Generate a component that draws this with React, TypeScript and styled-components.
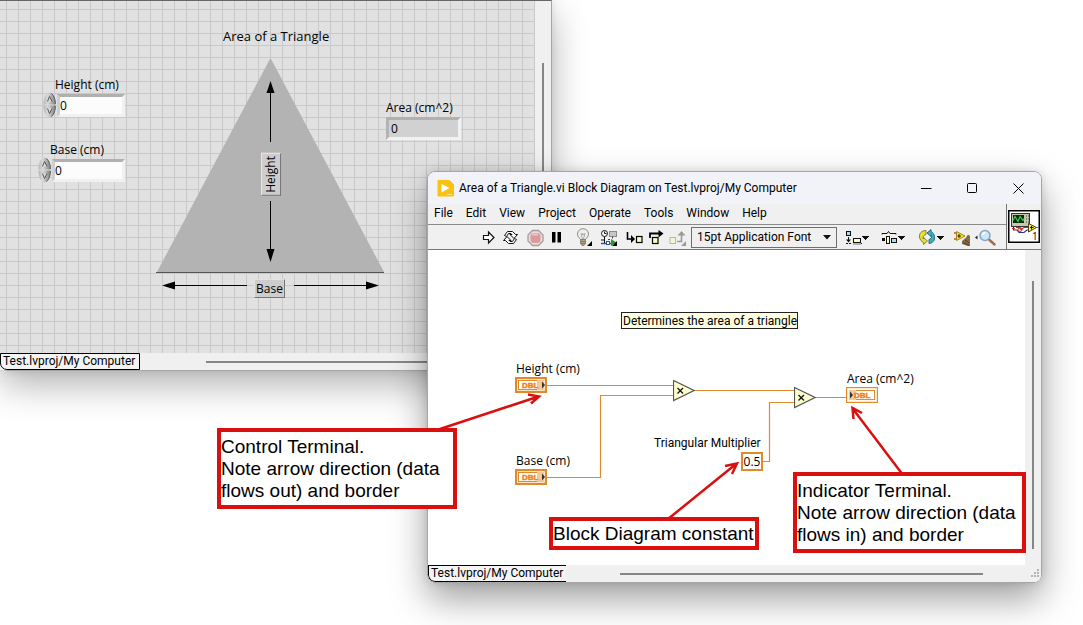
import React from "react";
import styled, { createGlobalStyle } from "styled-components";

const GlobalStyle = createGlobalStyle`
  *, *::before, *::after { box-sizing: border-box; }
  html, body { margin: 0; padding: 0; background: #fff; }
  body, button, input, select {
    font-family: "Open Sans", "Noto Sans", sans-serif;
    font-size: 12px;
    line-height: 16px;
    color: #000;
  }
  button { padding: 0; border: 0; background: none; }
  svg { display: block; }
`;

const ORANGE = "#e08a2c";
const RED = "#d9100f";
const NARROW = `Roboto, "Open Sans", sans-serif`;

/* ---------- windows ---------- */

const Desktop = styled.main`
  position: relative;
  min-height: 100vh;
  overflow: hidden;
`;

const PanelWindow = styled.section`
  position: absolute;
  top: 0;
  left: 0;
  width: 552px;
  height: 371px;
  display: flex;
  flex-direction: column;
  border: 1px solid #a6a6a6;
  border-left: 0;
  border-top-color: #666;
  border-bottom-left-radius: 8px;
  background: #f0f0f0;
  box-shadow: 0 14px 36px rgba(0, 0, 0, 0.3), 0 0 8px rgba(0, 0, 0, 0.1);
`;

const DiagramWindow = styled.section`
  position: absolute;
  top: 171px;
  left: 427px;
  right: 41px;
  height: 412px;
  display: flex;
  flex-direction: column;
  border: 1px solid #a6a6a6;
  border-radius: 8px;
  overflow: hidden;
  background: #f0f0f0;
`;

const DiagramShadow = styled.div`
  position: absolute;
  top: 171px;
  left: 427px;
  right: 41px;
  height: 412px;
  border-radius: 8px;
  box-shadow: 0 16px 36px rgba(0, 0, 0, 0.38), 0 0 8px rgba(0, 0, 0, 0.12);
`;

const Workspace = styled.div`
  display: flex;
  flex: 1;
  min-height: 0;
`;

const PanelCanvas = styled.div`
  position: relative;
  flex: 1;
  overflow: hidden;
  background-color: #e1e1e1;
  background-image: linear-gradient(to right, #c9c9c9 1px, transparent 1px),
    linear-gradient(to bottom, #c9c9c9 1px, transparent 1px);
  background-size: 12px 12px;
  background-position: 6px 8px;
`;

const DiagramCanvas = styled.div`
  position: relative;
  flex: 1;
  overflow: hidden;
  background: #fff;
`;

const VerticalScroll = styled.div<{ $top: number; $bottom: number }>`
  display: flex;
  justify-content: center;
  width: 16px;
  padding: ${(p) => p.$top}px 0 ${(p) => p.$bottom}px;
  background: #f0f0f0;
`;

const VerticalThumb = styled.div`
  width: 2px;
  background: #868686;
`;

const StatusBar = styled.footer`
  display: flex;
  align-items: center;
  height: 17px;
  background: #f0f0f0;
`;

const ProjectButton = styled.button<{ $open?: boolean }>`
  width: ${(p) => (p.$open ? 138 : 140)}px;
  height: 17px;
  padding: 0 2px;
  border: 1px solid #000;
  border-bottom-left-radius: 7px;
  ${(p) => p.$open && "border-right: 0;"}
  font-family: ${NARROW};
  line-height: 15px;
  text-align: left;
  white-space: nowrap;
  background: #f4f4f4;
`;

const HorizontalThumb = styled.div<{ $left: number; $right: number }>`
  flex: 1;
  height: 2px;
  margin: 0 ${(p) => p.$right}px 0 ${(p) => p.$left}px;
  background: #868686;
`;

/* ---------- free items on a canvas ---------- */

const Item = styled.div<{ $x: number; $y: number }>`
  position: absolute;
  left: ${(p) => p.$x}px;
  top: ${(p) => p.$y}px;
  white-space: nowrap;
`;

const Layer = styled.svg`
  position: absolute;
  inset: 0;
  width: 100%;
  height: 100%;
  pointer-events: none;
`;

const Heading = styled.h2`
  margin: 0;
  font-size: 13px;
  font-weight: 400;
  line-height: 16px;
`;

const NarrowText = styled.div`
  font-family: ${NARROW};
`;

const FieldLabel = styled.label<{ $indent: number }>`
  display: block;
  margin-left: ${(p) => p.$indent}px;
  line-height: 14px;
`;

const FieldRow = styled.div`
  display: flex;
  align-items: center;
`;

const Spinner = styled.div`
  display: flex;
  flex-direction: column;
`;

const Field = styled.input<{ $width: number; $readOnly?: boolean }>`
  width: ${(p) => p.$width}px;
  height: 23px;
  margin-top: ${(p) => (p.$readOnly ? 2 : 0)}px;
  padding: 0 ${(p) => (p.$readOnly ? 2 : 0)}px;
  border: 3px solid;
  border-color: #b0b0b0 #f1f1f1 #f1f1f1 ${(p) => (p.$readOnly ? "#b4b4b4" : "#cfcfcf")};
  border-radius: 0;
  outline: 0;
  background: ${(p) => (p.$readOnly ? "#d1d1d1" : "#fcfcfc")};
`;

const Tag = styled.div<{ $vertical?: boolean }>`
  padding: 1px 1px 0;
  border: 1px solid;
  border-color: #e2e2e2 #777 #777 #e2e2e2;
  background: #cdcdcd;
  ${(p) => p.$vertical && "padding: 2px 1px; writing-mode: vertical-rl; transform: rotate(180deg); border-color: #777 #e8e8e8 #e8e8e8 #777;"}
`;

const Note = styled.div`
  padding: 1px 0 0 1px;
  border: 1px solid #222;
  font-family: ${NARROW};
  line-height: 14px;
  background: #ffffe1;
`;

const Constant = styled.div`
  width: 22px;
  height: 19px;
  border: 2px solid ${ORANGE};
  line-height: 15px;
  text-align: center;
  background: #fff;
`;

/* ---------- title, menu, toolbar ---------- */

const TitleBar = styled.header`
  display: flex;
  align-items: center;
  gap: 5px;
  height: 32px;
  padding-left: 9px;
  background: #f1f3f9;
`;

const Title = styled.h1`
  flex: 1;
  margin: 0;
  font-family: ${NARROW};
  font-size: 12px;
  font-weight: 400;
  line-height: 16px;
  white-space: nowrap;
`;

const CaptionButton = styled.button`
  display: flex;
  align-items: center;
  justify-content: center;
  width: 46px;
  height: 32px;
`;

const CommandArea = styled.div`
  display: flex;
  height: 46px;
  border-bottom: 1px solid #777;
`;

const Commands = styled.div`
  display: flex;
  flex: 1;
  flex-direction: column;
  border-right: 1px solid #777;
`;

const MenuBar = styled.nav`
  display: flex;
  align-items: flex-start;
  height: 21px;
  border-bottom: 1px solid #8a8a8a;
`;

const MenuButton = styled.button`
  height: 18px;
  padding: 0 7px 0 6px;
  font-family: ${NARROW};
  line-height: 18px;
`;

const Toolbar = styled.div`
  display: flex;
  align-items: center;
  flex: 1;
  padding-left: 49px;
`;

const ToolGroup = styled.div<{ $gap?: number }>`
  display: flex;
  margin-right: ${(p) => p.$gap ?? 0}px;
`;

const ToolButton = styled.button`
  display: block;
  height: 20px;
`;

const FontPicker = styled.div`
  position: relative;
  width: 146px;
  margin-right: 3px;
`;

const FontSelect = styled.select`
  appearance: none;
  width: 100%;
  height: 21px;
  padding: 0 20px 0 5px;
  border: 1px solid #6f6f6f;
  border-radius: 0;
  font-family: ${NARROW};
  background: #f0f0f0;
`;

const PickerArrow = styled.svg`
  position: absolute;
  right: 6px;
  top: 8px;
  pointer-events: none;
`;

const ConnectorPane = styled.div`
  display: flex;
  justify-content: center;
  width: 34px;
  padding-top: 6px;
`;

/* ---------- annotations ---------- */

const Callout = styled.p<{ $x: number; $y: number; $width: number }>`
  position: absolute;
  left: ${(p) => p.$x}px;
  top: ${(p) => p.$y}px;
  width: ${(p) => p.$width}px;
  margin: 0;
  padding: 4px 0 3px;
  border: 4px solid ${RED};
  font-family: "Liberation Sans", Arial, sans-serif;
  font-size: 19px;
  line-height: 22px;
  white-space: nowrap;
  background: #fff;
`;

const CalloutBar = styled(Callout)`
  padding: 2px 0 1px;
`;

/* ---------- drawings ---------- */

const Caret = ({ x }: { x: number }) => <path d={`M${x} 9h7v1h-1v1h-1v1h-1v1h-1v-1h-1v-1h-1v-1h-1z`} fill="#111" />;

const SpinArrow = ({ down }: { down?: boolean }) => (
  <svg width="14" height="13" viewBox="0 0 14 13">
    <defs>
      <linearGradient id={down ? "spinDown" : "spinUp"} x1="0" x2="1">
        <stop offset="0" stopColor="#b4b4b4" />
        <stop offset=".35" stopColor="#dadada" />
        <stop offset="1" stopColor="#808080" />
      </linearGradient>
    </defs>
    <g transform={down ? "matrix(1 0 0 -1 0 13)" : undefined}>
      <path d="M.5 12.500C.5 6 2.500 1 6.500 0.500C10.500 1 12.500 6 12.500 12.500Z" fill={`url(#${down ? "spinDown" : "spinUp"})`} />
      <path d="M8.500 1.500C11 3.500 12.500 8 12.500 12" fill="none" stroke="#666" />
      <path d="M4.500 9.500L6.500 4.500L9 9.500" fill="#ddd" stroke="#555" />
    </g>
  </svg>
);

const RunIcon = () => (
  <svg width="22" height="20">
    <path d="M6.500 8.500H11.500V5L17 10.500L11.500 16V12.500H6.500Z" fill="#fff" stroke="#111" strokeWidth="1.200" />
  </svg>
);

const RunLoopIcon = () => (
  <svg width="22" height="20">
    <path d="M5.500 8.500L8.500 4.500H13.500L16.500 7.500H18.500L15 11.500L11 7.500H13L12 6.500H9.500L7.500 9.500Z" fill="#fff" stroke="#111" />
    <path d="M17.500 12.500L14.500 16.500H9.500L6.500 13.500H4.500L8 9.500L12 13.500H10L11 14.500H13.500L15.500 11.500Z" fill="#fff" stroke="#111" />
  </svg>
);

const AbortIcon = () => (
  <svg width="22" height="20">
    <path d="M7.500 3.500h6l4.500 4.500v6l-4.500 4.500h-6L3 14V8z" fill="#eadcdc" stroke="#a79b9b" strokeWidth="1.300" />
    <rect x="5.500" y="6" width="10" height="10" rx="3.500" fill="#d99a9a" />
    <path d="M7 7.500h6" stroke="#edc4c4" strokeWidth="2" />
  </svg>
);

const PauseIcon = () => (
  <svg width="22" height="20">
    <path d="M5 5h3.500v10.500H5zM10.500 5H14v10.500h-3.500z" fill="#000" />
  </svg>
);

const BulbIcon = () => (
  <svg width="24" height="20">
    <path d="M7.500 12.500C6 10.500 4.500 9.500 4.500 7A5.500 5.300 0 0 1 15.500 7C15.500 9.500 14 10.500 12.500 12.500Z" fill="#eeeeea" stroke="#8d8d8d" />
    <path d="M8 6.500L9.500 12M12 6.500L10.500 12M8 6.500l1.300 1.500L10 6.500l.8 1.500L12 6.500" fill="none" stroke="#999" strokeWidth=".8" />
    <path d="M7.500 12.500h5v4l-1.500 2h-2l-1.500-2z" fill="#b3a57a" stroke="#777" strokeWidth=".8" />
    <path d="M7.500 14.500h5M7.500 16.500h5" stroke="#77704f" strokeWidth=".8" />
    <path d="M19 14v5h-5z" fill="#000" />
  </svg>
);

const RetainIcon = () => (
  <svg width="24" height="20">
    <circle cx="7.500" cy="6.500" r="3" fill="#fff" stroke="#111" />
    <path d="M7.500 4.500v2h2M7.500 9.500v7M4 13h3" fill="none" stroke="#111" />
    <rect x="12.500" y="4.500" width="7" height="5" fill="#c6c6c6" stroke="#8a8a8a" />
    <path d="M4 16.500h12" stroke="#2857a0" strokeWidth="1.400" />
    <rect x="9.500" y="14.500" width="3" height="3" fill="#fff" stroke="#2857a0" />
    <path d="M11 12.500h2M15.500 9.500v2" stroke="#444" />
    <path d="M14 12l5.500 3.500L14 19z" fill="#249b2c" />
    <path d="M20 14v5h-5z" fill="#000" />
  </svg>
);

const StepIntoIcon = () => (
  <svg width="24" height="20">
    <path d="M6.500 5v7H11" fill="none" stroke="#000" strokeWidth="1.600" />
    <path d="M10 8l4 4-4 4z" fill="#000" />
    <rect x="15.500" y="9.500" width="5.500" height="6" fill="#fffbc4" stroke="#000" strokeWidth="1.200" />
  </svg>
);

const StepOverIcon = () => (
  <svg width="24" height="20">
    <path d="M5 11V6.500h10" fill="none" stroke="#000" strokeWidth="1.800" />
    <path d="M13.500 3l5 3.500-5 4z" fill="#000" />
    <rect x="7.500" y="10.500" width="5.500" height="6" fill="#fffbc4" stroke="#000" strokeWidth="1.200" />
  </svg>
);

const StepOutIcon = () => (
  <svg width="22" height="20">
    <rect x="1" y="10.500" width="5.500" height="6" fill="#f7f4d6" stroke="#b9b7a2" />
    <path d="M8 14.500h4.500V8" fill="none" stroke="#9a9a9a" strokeWidth="1.600" />
    <path d="M8.500 8.500l4-4.500 4 4.500z" fill="#9a9a9a" />
    <path d="M17 14v5h-5z" fill="#999" />
  </svg>
);

const AlignIcon = () => (
  <svg width="36" height="20">
    <rect x="6.500" y="4.500" width="4" height="4" fill="#9de1ee" stroke="#111" />
    <path d="M8.500 10v3" stroke="#111" />
    <path d="M6 12.500h5L8.500 15.500z" fill="#111" />
    <path d="M6 16.500h6M21 16.500h1" stroke="#111" strokeDasharray="2 1" />
    <rect x="13.500" y="11.500" width="7" height="4" fill="#fffbc4" stroke="#111" />
    <path d="M13 17h8" stroke="#777" />
    <Caret x={22} />
  </svg>
);

const DistributeIcon = () => (
  <svg width="36" height="20">
    <path d="M6 7.500V6.500H11L12.500 4.500L14 6.500H20V7.500" fill="none" stroke="#111" />
    <rect x="6" y="11" width="3" height="3" fill="#111" />
    <rect x="10.500" y="9.500" width="3" height="7" fill="#fffbc4" stroke="#111" />
    <rect x="15.500" y="11.500" width="5" height="4" fill="#9de1ee" stroke="#111" />
    <Caret x={22} />
  </svg>
);

const ReorderIcon = () => (
  <svg width="36" height="20">
    <path d="M14 3.500C9.500 3.500 7 6.500 7.500 10C8 13 9.500 14.500 11.500 15.500V17.500L15.500 14L11.500 10.500V12C10.500 11 11 8.500 14 7.500Z" fill="#e7df39" stroke="#77742c" strokeWidth=".9" />
    <path d="M17 16.500C21 16 23 13.500 22.500 9.500C22 7 21 5.500 19 4.500V2.500L15 6L19 9.500V8C20 9.500 20 11.500 17 12.500Z" fill="#42aec2" stroke="#255f6b" strokeWidth=".9" />
    <Caret x={25} />
  </svg>
);

const CleanupIcon = () => (
  <svg width="25" height="20">
    <path d="M8.500 4.500L17 9L8.500 13.500z" fill="#f6e431" stroke="#a78a13" />
    <path d="M11 7v4M9.500 9h3.500" stroke="#222" />
    <path d="M6 6h2M6 12h2" stroke="#d5481e" strokeWidth="1.500" />
    <path d="M14 14l4-3.500 2-3 2 1.500v10h-2l-6-2z" fill="#8a6a48" />
    <path d="M15 15.500l6 3M17 13l4 3" stroke="#4c3522" />
  </svg>
);

const SearchIcon = () => (
  <svg width="26" height="20">
    <path d="M4.500 8.500v4L2 10.500z" fill="#222" />
    <circle cx="12" cy="8.500" r="5" fill="#c9e8fb" stroke="#8aa5c4" strokeWidth="1.500" />
    <path d="M9.500 8a3 3 0 0 1 3-2.500" fill="none" stroke="#fff" strokeWidth="1.500" />
    <path d="M16.500 13l5 4.500" stroke="#a66d4b" strokeWidth="2.500" strokeLinecap="round" />
  </svg>
);

const AppIcon = () => (
  <svg width="17" height="17">
    <path d="M1 .5h11.500l4 4v11.500h-15.500z" fill="#fbc112" stroke="#fbc112" strokeLinejoin="round" />
    <path d="M4.500 4l8 4-8 4.500z" fill="#fff" />
    <path d="M10.500 14.500h2M13.500 14.500h1.500" stroke="#fff3bd" />
  </svg>
);

const ViIcon = () => (
  <svg width="32" height="33" viewBox="0 0 32 33">
    <rect x=".75" y=".75" width="30.500" height="31.500" fill="#fff" stroke="#000" strokeWidth="1.500" />
    <rect x="3.500" y="3.500" width="18" height="13" fill="#c8c6ae" stroke="#333" />
    <rect x="5" y="5" width="11" height="8" fill="#062b0c" />
    <path d="M5 10.500l2-4 3 5 2-5 3 4 1-2" fill="none" stroke="#35d04a" strokeWidth="1.200" />
    <path d="M18 6h1M20 6h1M18 9h1M20 9h1M18 12h1M20 12h1" stroke="#444" />
    <path d="M5.500 17v3h3.500l2 2.500h5l3-2.500h2" fill="none" stroke="#28358f" strokeWidth="1.200" />
    <path d="M4 18.500h3M8 17.500h3l2 2 3-2h4" fill="none" stroke="#cf2424" strokeWidth="1.200" />
    <circle cx="12" cy="19.500" r="2" fill="none" stroke="#cf2424" />
    <path d="M20.500 13.500l8 4-8 4.500z" fill="#ffee35" stroke="#4b4310" />
    <path d="M23.500 16v3.500M22 17.500h3.500" stroke="#111" />
    <path d="M28.500 17.500h2" stroke="#d33" />
    <text x="24" y="30" fontSize="10" fontFamily="Open Sans, sans-serif">1</text>
  </svg>
);

const Terminal = ({ indicator }: { indicator?: boolean }) => (
  <svg width="32" height="16" role="img" aria-label="DBL terminal">
    <rect
      x={indicator ? 0.5 : 1}
      y={indicator ? 0.5 : 1}
      width={indicator ? 31 : 30}
      height={indicator ? 15 : 14}
      fill="#fffaf0"
      stroke={ORANGE}
      strokeWidth={indicator ? 1.3 : 2.4}
    />
    <rect x="3.500" y="3.500" width="25" height="9" fill="#fff" stroke={ORANGE} />
    <rect x={indicator ? 3 : 22} y="3" width="7" height="10" fill="#f8c795" />
    <text
      x={indicator ? 8 : 7}
      y="11"
      fontSize="8"
      fontWeight="700"
      fontFamily="Liberation Sans, sans-serif"
      fill="#ee8417"
      stroke="#ee8417"
      strokeWidth=".5"
    >
      DBL
    </text>
    <path d={indicator ? "M4 4.500v7l3-3.500z" : "M27 4.500v7l3-3.500z"} fill="#333" />
  </svg>
);

const Multiply = () => (
  <svg width="22" height="22" role="img" aria-label="Multiply">
    <path d="M.5 .5L21 10.500L.5 20.500Z" fill="#ffffcf" stroke="#555" strokeWidth="1.200" />
    <path d="M4.500 8l5.500 5.500M10 8l-5.500 5.500" stroke="#111" strokeWidth="1.300" />
  </svg>
);

const PanelArt = () => (
  <Layer aria-hidden="true">
    <path d="M270.500 57L384 271H157Z" fill="#b3b3b3" />
    <path d="M156 271.500H384" stroke="#555" />
    <path d="M270.500 90V141M270.500 200V250M172 284.500H247M294 284.500H369" stroke="#000" strokeWidth="1" />
    <path d="M270.500 80l4 12h-8zM270.500 261l4-13h-8zM162 284.500l13-4v8zM379 284.500l-13-4v8z" fill="#000" />
  </Layer>
);

const Wires = () => (
  <Layer aria-hidden="true">
    <path
      d="M119 135.500H246M119 227.500H172.500V145.500H246M266 140.500H367M334 211.500H341.500V152.500H367M387 147.500H419"
      fill="none"
      stroke={ORANGE}
      strokeWidth="1.200"
    />
  </Layer>
);

const NumericControl = ({ id, label, indent, width }: { id: string; label: string; indent: number; width: number }) => (
  <>
    <FieldLabel htmlFor={id} $indent={indent}>{label}</FieldLabel>
    <FieldRow>
      <Spinner>
        <button aria-label={`Increase ${label}`}><SpinArrow /></button>
        <button aria-label={`Decrease ${label}`}><SpinArrow down /></button>
      </Spinner>
      <Field id={id} $width={width} defaultValue="0" />
    </FieldRow>
  </>
);

const MENUS = ["File", "Edit", "View", "Project", "Operate", "Tools", "Window", "Help"];

export default function App() {
  return (
    <>
      <GlobalStyle />
      <Desktop>
        <PanelWindow aria-label="Front panel">
          <Workspace>
            <PanelCanvas>
              <PanelArt />
              <Item $x={223} $y={27}><Heading>Area of a Triangle</Heading></Item>
              <Item $x={43} $y={77}>
                <NumericControl id="height" label="Height (cm)" indent={12} width={68} />
              </Item>
              <Item $x={38} $y={142}>
                <NumericControl id="base" label="Base (cm)" indent={12} width={73} />
              </Item>
              <Item $x={386} $y={100}>
                <FieldLabel htmlFor="area" $indent={0}>Area (cm^2)</FieldLabel>
                <Field id="area" $width={75} $readOnly readOnly value="0" />
              </Item>
              <Item $x={261} $y={152}><Tag $vertical>Height</Tag></Item>
              <Item $x={254} $y={278}><Tag>Base</Tag></Item>
            </PanelCanvas>
            <VerticalScroll $top={62} $bottom={20}><VerticalThumb /></VerticalScroll>
          </Workspace>
          <StatusBar>
            <ProjectButton>Test.lvproj/My Computer</ProjectButton>
            <HorizontalThumb $left={66} $right={60} />
          </StatusBar>
        </PanelWindow>

        <DiagramShadow />
        <DiagramWindow aria-label="Block diagram">
          <TitleBar>
            <AppIcon />
            <Title>Area of a Triangle.vi Block Diagram on Test.lvproj/My Computer</Title>
            <ToolGroup>
              <CaptionButton aria-label="Minimize">
                <svg width="11" height="11"><path d="M0 5.500h10.500" stroke="#000" /></svg>
              </CaptionButton>
              <CaptionButton aria-label="Maximize">
                <svg width="11" height="11"><rect x=".5" y=".5" width="9" height="9" rx="1" fill="none" stroke="#000" /></svg>
              </CaptionButton>
              <CaptionButton aria-label="Close">
                <svg width="11" height="11"><path d="M.5 .5l10 10M10.500 .5l-10 10" stroke="#000" /></svg>
              </CaptionButton>
            </ToolGroup>
          </TitleBar>
          <CommandArea>
            <Commands>
              <MenuBar>
                {MENUS.map((name) => <MenuButton key={name}>{name}</MenuButton>)}
              </MenuBar>
              <Toolbar role="toolbar">
                <ToolGroup $gap={4}>
                  <ToolButton aria-label="Run"><RunIcon /></ToolButton>
                  <ToolButton aria-label="Run continuously"><RunLoopIcon /></ToolButton>
                </ToolGroup>
                <ToolGroup $gap={4}>
                  <ToolButton aria-label="Abort"><AbortIcon /></ToolButton>
                  <ToolButton aria-label="Pause"><PauseIcon /></ToolButton>
                </ToolGroup>
                <ToolGroup>
                  <ToolButton aria-label="Highlight execution"><BulbIcon /></ToolButton>
                  <ToolButton aria-label="Retain wire values"><RetainIcon /></ToolButton>
                  <ToolButton aria-label="Step into"><StepIntoIcon /></ToolButton>
                  <ToolButton aria-label="Step over"><StepOverIcon /></ToolButton>
                  <ToolButton aria-label="Step out"><StepOutIcon /></ToolButton>
                </ToolGroup>
                <FontPicker>
                  <FontSelect aria-label="Font">
                    <option>15pt Application Font</option>
                  </FontSelect>
                  <PickerArrow width="8" height="5"><path d="M0 0h8L4 4.500z" fill="#111" /></PickerArrow>
                </FontPicker>
                <ToolGroup>
                  <ToolButton aria-label="Align objects"><AlignIcon /></ToolButton>
                  <ToolButton aria-label="Distribute objects"><DistributeIcon /></ToolButton>
                  <ToolButton aria-label="Reorder"><ReorderIcon /></ToolButton>
                  <ToolButton aria-label="Clean up diagram"><CleanupIcon /></ToolButton>
                  <ToolButton aria-label="Search"><SearchIcon /></ToolButton>
                </ToolGroup>
              </Toolbar>
            </Commands>
            <ConnectorPane><ViIcon /></ConnectorPane>
          </CommandArea>
          <Workspace>
            <DiagramCanvas>
              <Wires />
              <Item $x={193} $y={62}><Note>Determines the area of a triangle</Note></Item>
              <Item $x={88} $y={111}>Height (cm)</Item>
              <Item $x={87} $y={127}><Terminal /></Item>
              <Item $x={88} $y={203}>Base (cm)</Item>
              <Item $x={87} $y={219}><Terminal /></Item>
              <Item $x={245} $y={130}><Multiply /></Item>
              <Item $x={366} $y={137}><Multiply /></Item>
              <Item $x={226} $y={185}><NarrowText>Triangular Multiplier</NarrowText></Item>
              <Item $x={313} $y={202}><Constant>0.5</Constant></Item>
              <Item $x={419} $y={121}>Area (cm^2)</Item>
              <Item $x={418} $y={137}><Terminal indicator /></Item>
            </DiagramCanvas>
            <VerticalScroll $top={31} $bottom={16}><VerticalThumb /></VerticalScroll>
          </Workspace>
          <StatusBar>
            <ProjectButton $open>Test.lvproj/My Computer</ProjectButton>
            <HorizontalThumb $left={54} $right={48} />
            <svg width="10" height="10" aria-hidden="true">
              <path d="M6 0h2v2h-2zM3 3h2v2h-2zM6 3h2v2h-2zM0 6h2v2h-2zM3 6h2v2h-2zM6 6h2v2h-2z" fill="#b4b4b4" />
            </svg>
          </StatusBar>
        </DiagramWindow>

        <Layer aria-hidden="true">
          <g fill="none" stroke={RED} strokeWidth="2.500">
            <path d="M437 430L537 397M528 394.500L539 396.500L531 403.500" />
            <path d="M668 519L736 464M725 466L737 463.500L732 474" />
            <path d="M903 475L853 409M853.500 419L852.500 408L862 413" />
          </g>
        </Layer>
        <Callout $x={217} $y={428} $width={240}>
          Control Terminal.<br />Note arrow direction (data<br />flows out) and border
        </Callout>
        <CalloutBar $x={549} $y={517} $width={210}>Block Diagram constant</CalloutBar>
        <Callout $x={793} $y={472} $width={233}>
          Indicator Terminal.<br />Note arrow direction (data<br />flows in) and border
        </Callout>
      </Desktop>
    </>
  );
}
